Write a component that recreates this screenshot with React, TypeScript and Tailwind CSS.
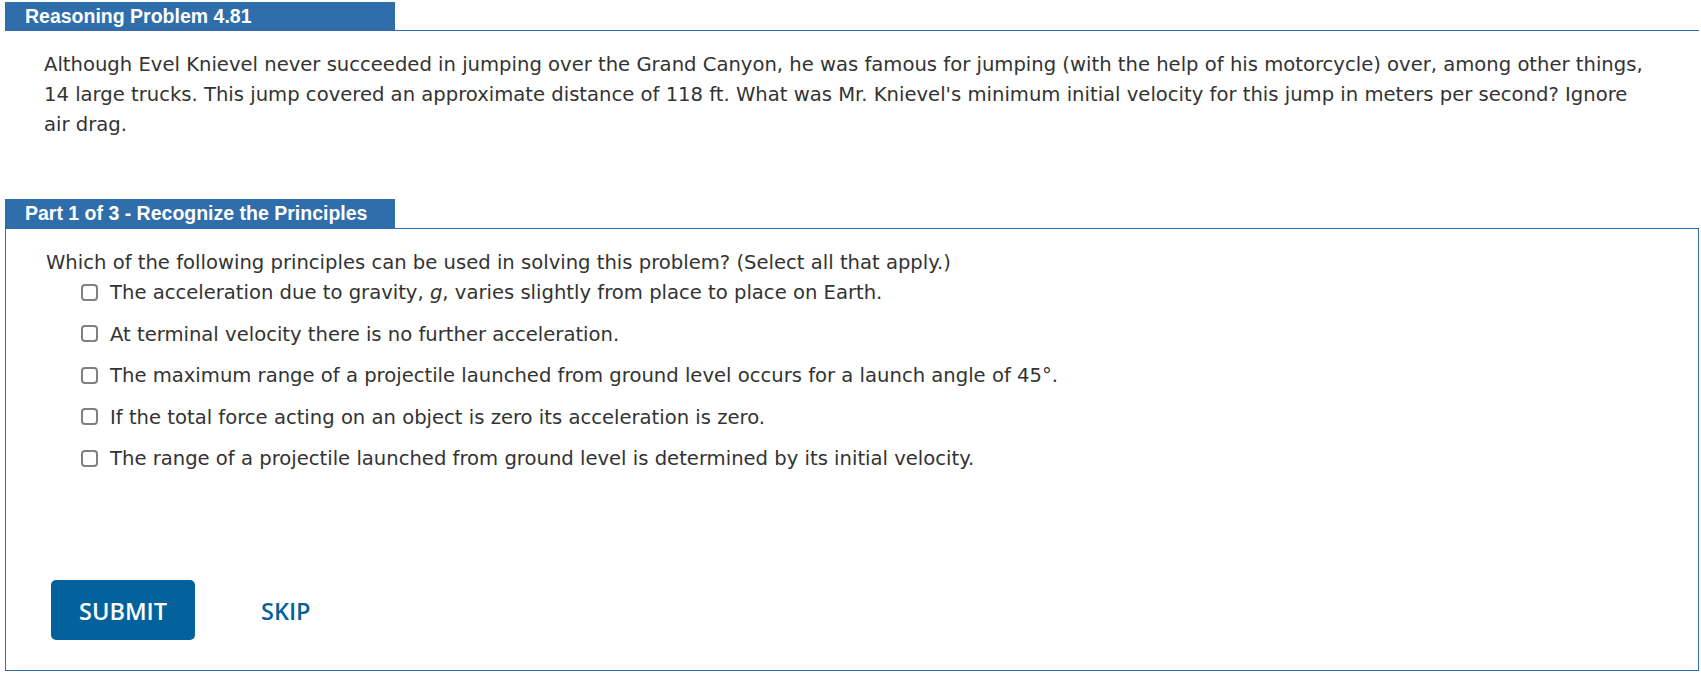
import { useState } from "react";

const options = [
  <>
    The acceleration due to gravity, <i>g</i>, varies slightly from place to place on Earth.
  </>,
  <>At terminal velocity there is no further acceleration.</>,
  <>The maximum range of a projectile launched from ground level occurs for a launch angle of 45°.</>,
  <>If the total force acting on an object is zero its acceleration is zero.</>,
  <>The range of a projectile launched from ground level is determined by its initial velocity.</>,
];

export default function App() {
  const [checked, setChecked] = useState<boolean[]>(options.map(() => false));

  const toggle = (i: number) => {
    setChecked((prev) => prev.map((c, j) => (j === i ? !c : c)));
  };

  return (
    <div className="w-[1701px] h-[676px] bg-white pt-[2px] pl-[5px] pr-[2px] text-[#333333] font-['Verdana','DejaVu_Sans',sans-serif]">
      {/* problem header */}
      <div className="flex items-end">
        <div className="w-[390px] h-[29px] bg-[#2f6eab] pl-5 flex items-center text-white font-bold text-[19.5px] font-['Liberation_Sans',Arial,sans-serif]">
          Reasoning Problem 4.81
        </div>
        <div className="flex-1 border-b border-[#2f6eab]" />
      </div>

      <p className="mt-[19px] pl-[39px] pr-[50px] text-[19.6px] leading-[30px]">
        Although Evel Knievel never succeeded in jumping over the Grand Canyon, he was famous for jumping (with the
        help of his motorcycle) over, among other things, 14 large trucks. This jump covered an approximate distance of
        118 ft. What was Mr. Knievel's minimum initial velocity for this jump in meters per second? Ignore air drag.
      </p>

      {/* part section */}
      <div className="mt-[59px]">
        <div className="w-[390px] h-[29px] bg-[#2f6eab] pl-5 flex items-center text-white font-bold text-[19.5px] font-['Liberation_Sans',Arial,sans-serif]">
          Part 1 of 3 - Recognize the Principles
        </div>
        <div className="h-[443px] border border-[#2f6eab] pt-[19px] pl-[40px] flex flex-col">
          <p className="text-[19.6px] leading-[30px]">
            Which of the following principles can be used in solving this problem? (Select all that apply.)
          </p>
          <ul className="pl-[35px] flex flex-col gap-[11.5px]">
            {options.map((opt, i) => (
              <li key={i} className="flex items-center gap-[12px] text-[19.6px] leading-[30px]">
                <input
                  type="checkbox"
                  checked={checked[i]}
                  onChange={() => toggle(i)}
                  className="appearance-none shrink-0 w-[17px] h-[17px] mt-[-2px] border-2 border-[#808080] rounded-[4px] bg-white checked:bg-[#0060df]"
                />
                <span>{opt}</span>
              </li>
            ))}
          </ul>

          <div className="mt-auto mb-[30px] pl-[5px] flex items-center gap-[38px] font-['Open_Sans',sans-serif] font-semibold text-[23.5px]">
            <button className="w-[144px] h-[60px] pt-[4px] rounded-[5px] bg-[#03629b] text-white">SUBMIT</button>
            <button className="px-[28px] h-[60px] pt-[4px] text-[#03629b]">SKIP</button>
          </div>
        </div>
      </div>
    </div>
  );
}
